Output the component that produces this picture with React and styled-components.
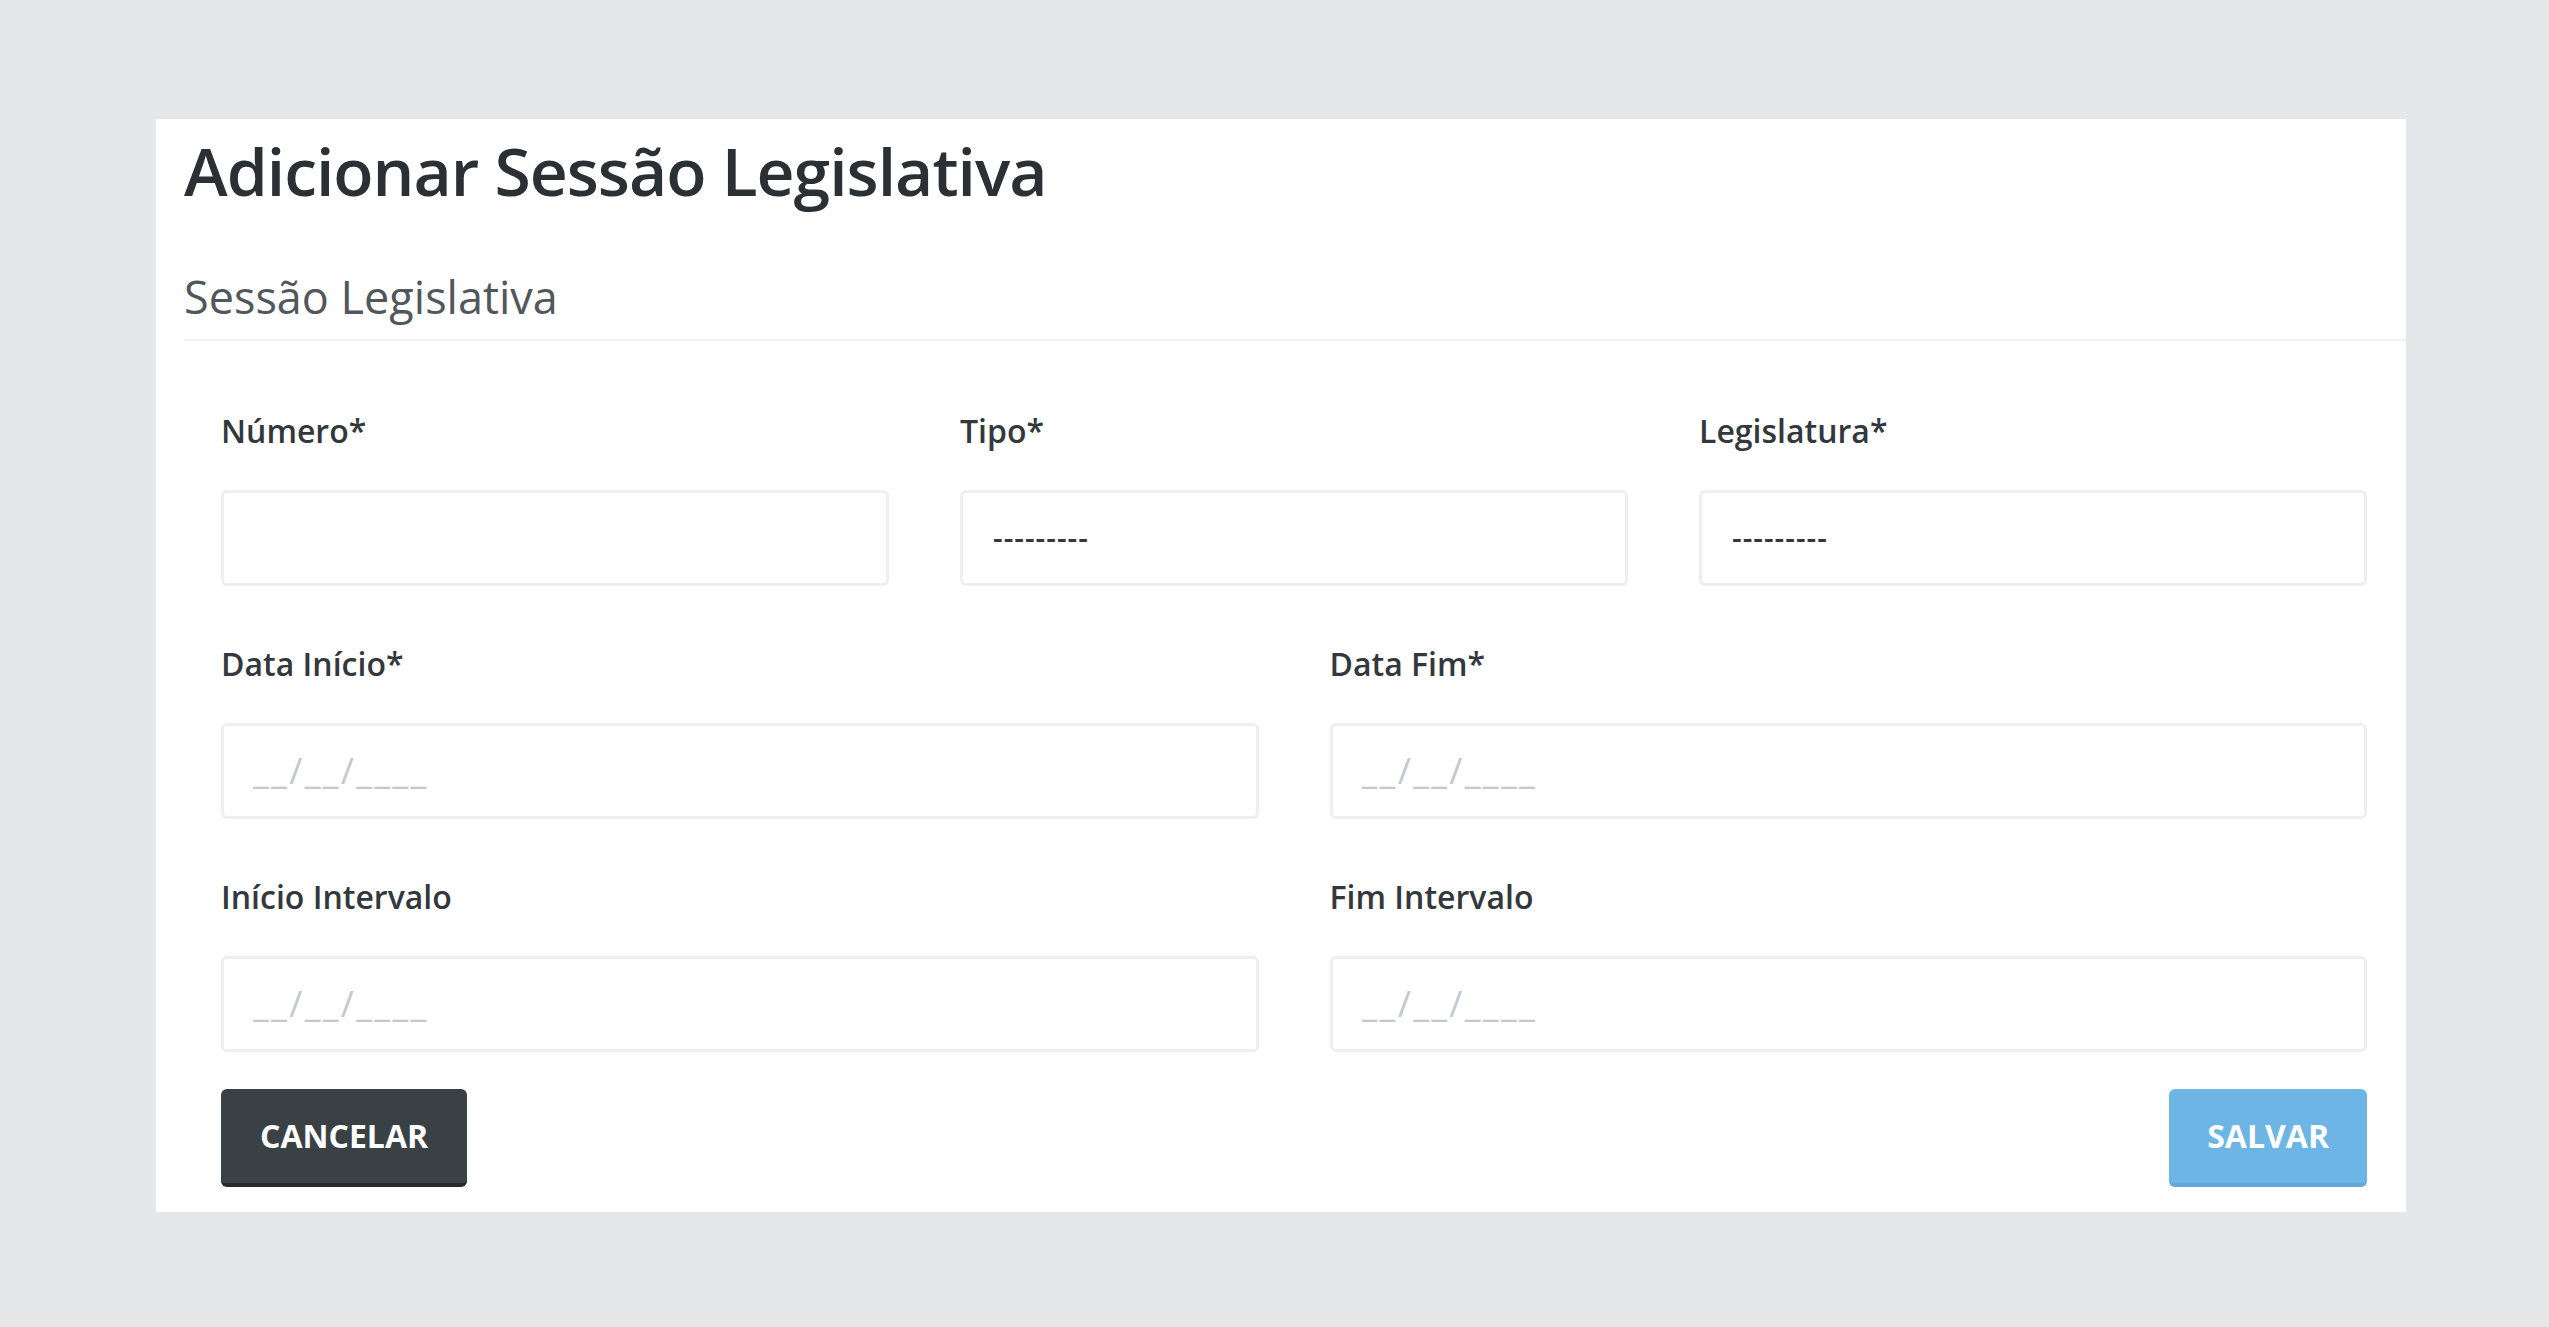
import React from 'react';
import styled, { createGlobalStyle } from 'styled-components';

const GlobalStyle = createGlobalStyle`
	* {
		box-sizing: border-box;
	}
	body {
		margin: 0;
		background: #e6e7e9;
		font-family: 'Open Sans', 'Noto Sans', sans-serif;
	}
`;

const App = () => {
	return (
		<Page>
			<GlobalStyle />
			<Panel>
				<Title>Adicionar Sessão Legislativa</Title>
				<Subtitle>Sessão Legislativa</Subtitle>
				<Form onSubmit={(e) => e.preventDefault()}>
					<Row cols={3}>
						<Field>
							<Label>Número*</Label>
							<Input type='text' />
						</Field>
						<Field>
							<Label>Tipo*</Label>
							<Select defaultValue=''>
								<option value=''>---------</option>
							</Select>
						</Field>
						<Field>
							<Label>Legislatura*</Label>
							<Select defaultValue=''>
								<option value=''>---------</option>
							</Select>
						</Field>
					</Row>
					<Row cols={2}>
						<Field>
							<Label>Data Início*</Label>
							<Input type='text' placeholder='__/__/____' />
						</Field>
						<Field>
							<Label>Data Fim*</Label>
							<Input type='text' placeholder='__/__/____' />
						</Field>
					</Row>
					<Row cols={2} last>
						<Field>
							<Label>Início Intervalo</Label>
							<Input type='text' placeholder='__/__/____' />
						</Field>
						<Field>
							<Label>Fim Intervalo</Label>
							<Input type='text' placeholder='__/__/____' />
						</Field>
					</Row>
					<Actions>
						<Button type='button' variant='dark'>
							Cancelar
						</Button>
						<Button type='submit' variant='primary'>
							Salvar
						</Button>
					</Actions>
				</Form>
			</Panel>
		</Page>
	);
};

export default App;

const Page = styled.div`
	min-height: 1327px;
	padding: 119px 0 0 156px;
`;

const Panel = styled.div`
	width: 2250px;
	background: #ffffff;
	padding: 15px 0 25px 28px;
`;

const Title = styled.h1`
	margin: 0;
	font-size: 66px;
	line-height: 1.1;
	font-weight: 600;
	letter-spacing: -1px;
	color: #2b3035;
`;

const Subtitle = styled.h2`
	margin: 63px 0 0;
	padding-bottom: 15px;
	border-bottom: 2px solid #eff1f3;
	font-size: 45px;
	line-height: 54px;
	font-weight: 400;
	color: #52575c;
`;

const Form = styled.form`
	padding: 70px 39px 0 37px;
`;

const Row = styled.div`
	display: grid;
	grid-template-columns: repeat(${(p) => p.cols}, 1fr);
	column-gap: 71px;
	margin-bottom: ${(p) => (p.last ? '37px' : '58px')};
`;

const Field = styled.div`
	display: flex;
	flex-direction: column;
`;

const Label = styled.label`
	display: block;
	margin-bottom: 39px;
	font-size: 32px;
	line-height: 40px;
	font-weight: 600;
	color: #33383d;
`;

const Input = styled.input`
	height: 96px;
	width: 100%;
	padding: 0 29px;
	border: 3px solid #edf0f2;
	border-radius: 6px;
	background: #ffffff;
	font-family: inherit;
	font-size: 36px;
	color: #33383d;
	outline: none;
	&::placeholder {
		color: #c3c9ce;
		letter-spacing: 2.3px;
	}
`;

const Select = styled.select`
	height: 96px;
	width: 100%;
	padding: 0 30px;
	border: 3px solid #edf0f2;
	border-radius: 6px;
	background: #ffffff;
	appearance: none;
	font-family: inherit;
	font-size: 30px;
	font-weight: 600;
	letter-spacing: 1px;
	color: #33383d;
	outline: none;
`;

const Actions = styled.div`
	display: flex;
	justify-content: space-between;
	align-items: center;
`;

const Button = styled.button`
	height: 98px;
	padding: 0 ${(p) => (p.variant === 'dark' ? '39px' : '38px')};
	border: none;
	border-radius: 6px;
	border-bottom: 4px solid
		${(p) => (p.variant === 'dark' ? '#262b2e' : '#62a8d8')};
	background: ${(p) => (p.variant === 'dark' ? '#3a4145' : '#6db5e5')};
	color: #ffffff;
	font-family: inherit;
	font-size: 32px;
	font-weight: 700;
	text-transform: uppercase;
	cursor: pointer;
`;
